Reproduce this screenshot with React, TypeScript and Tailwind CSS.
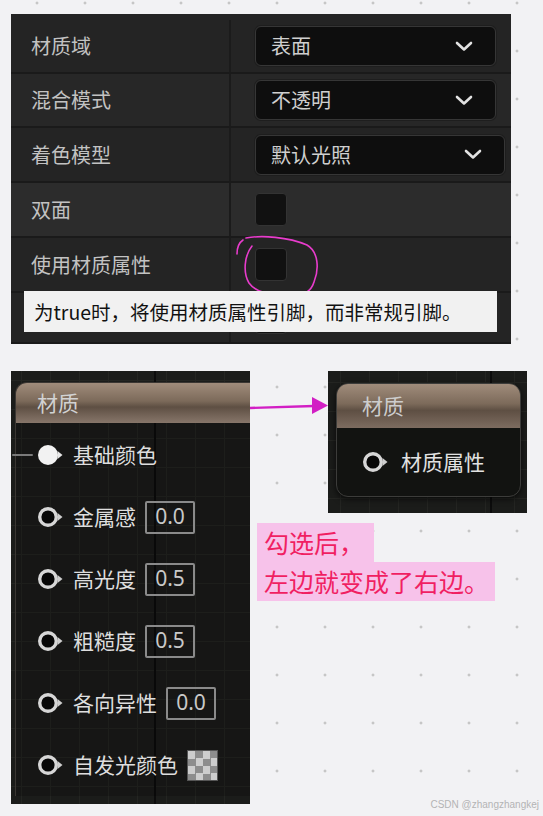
import React from 'react';

const font = "font-['Noto_Sans_CJK_SC','Noto_Sans',sans-serif]";

const Chevron: React.FC = () => (
  <svg width="18" height="11" viewBox="0 0 18 11" fill="none">
    <path d="M2 2 L9 8.5 L16 2" stroke="#e2e2e2" strokeWidth="2.6" strokeLinecap="round" strokeLinejoin="round" />
  </svg>
);

const Pin: React.FC<{ filled?: boolean }> = ({ filled }) => (
  <svg width="26" height="24" viewBox="0 0 26 24" className="shrink-0">
    {filled ? (
      <circle cx="11" cy="12" r="10" fill="#f2f2f2" />
    ) : (
      <circle cx="11" cy="12" r="8.3" fill="#070707" stroke="#d6d6d6" strokeWidth="3.4" />
    )}
    <polygon points="20.5,8 25.5,12 20.5,16" fill={filled ? '#e8e8e8' : '#cfcfcf'} />
  </svg>
);

const Dropdown: React.FC<{ value: string; wide?: boolean }> = ({ value, wide }) => (
  <div
    className={`${wide ? 'w-[250px]' : 'w-[241px]'} h-[40px] rounded-[6px] bg-[#0e0e0e] border border-[#363636] shadow-[0_0_0_1px_#1e1e1e] flex items-center justify-between pl-[15px] pr-[22px]`}
  >
    <span className="text-[20px] text-[#cfcfcf]">{value}</span>
    <Chevron />
  </div>
);

const Checkbox: React.FC = () => (
  <div className="w-[32px] h-[33px] rounded-[4px] bg-[#111111] border border-[#333333]" />
);

const ValueBox: React.FC<{ v: string }> = ({ v }) => (
  <div className="ml-[9px] w-[50px] h-[33px] border-2 border-[#8a8a8a] rounded-[2px] flex items-center justify-center text-[21px] text-[#c9c9c9] font-['Noto_Sans',sans-serif]">
    {v}
  </div>
);

const rows = [
  { label: '材质域', h: 'h-[60px] pt-[6px]', bg: 'bg-[#242424]', value: <Dropdown value="表面" /> },
  { label: '混合模式', h: 'h-[54px]', bg: 'bg-[#272727]', value: <Dropdown value="不透明" /> },
  { label: '着色模型', h: 'h-[55px]', bg: 'bg-[#242424]', value: <Dropdown value="默认光照" wide /> },
  { label: '双面', h: 'h-[55px]', bg: 'bg-[#2c2c2c]', value: <Checkbox /> },
  { label: '使用材质属性', h: 'h-[55px]', bg: 'bg-[#242424]', value: <Checkbox /> },
  { label: '', h: 'h-[51px]', bg: 'bg-[#242424]', value: <Checkbox /> },
];

const pins = [
  { label: '基础颜色', filled: true },
  { label: '金属感', v: '0.0' },
  { label: '高光度', v: '0.5' },
  { label: '粗糙度', v: '0.5' },
  { label: '各向异性', v: '0.0' },
  { label: '自发光颜色', checker: true },
];

const grid =
  "[background-image:linear-gradient(90deg,#0c0c0c_0_2px,transparent_2px),linear-gradient(90deg,#242522_0_1px,transparent_1px),linear-gradient(0deg,#242522_0_1px,transparent_1px)]";

export default function App() {
  return (
    <div
      className={`relative w-[543px] h-[816px] overflow-hidden pt-[14px] bg-[#f2f2f4] ${font} [background-image:radial-gradient(circle,#c6c6c6_1.3px,transparent_1.7px)] [background-size:48px_48px] [background-position:13px_27px]`}
    >
      {/* details panel */}
      <div className="relative ml-[11px] w-[500px] h-[330px] bg-[#242424] overflow-hidden">
        {rows.map((r, i) => (
          <div key={i} className={`${r.h} ${r.bg} grid grid-cols-[220px_1fr] border-b-2 border-[#1a1a1a]`}>
            <div className="flex items-center pl-[20px] border-r-2 border-[#1b1b1b] text-[20px] text-[#c2c2c2]">
              {r.label}
            </div>
            <div className="flex items-center pl-[24px]">{r.value}</div>
          </div>
        ))}

        {/* hand-drawn circle */}
        <svg className="absolute left-[219px] top-[216px]" width="95" height="72" viewBox="0 0 95 72" fill="none">
          <path
            d="M7 24 C7 17 10 12 13 10 M16 8 C32 5 58 7 77 15 C89 22 89 40 84 52 C81 62 73 67 57 66 C42 65 26 63 19 53 C13 43 14 26 22 16"
            stroke="#e83ccc"
            strokeWidth="1.6"
            strokeLinecap="round"
          />
        </svg>

        {/* tooltip */}
        <div className="absolute left-[13px] top-[277px] w-[473px] h-[41px] bg-[#f1f1f1] flex items-center pl-[10px] text-[19.5px] text-[#111111]">
          为true时，将使用材质属性引脚，而非常规引脚。
        </div>
      </div>

      {/* node graphs */}
      <div className="flex items-start mt-[27px] ml-[11px]">
        <div
          className={`w-[239px] h-[433px] bg-[#1b1c1a] overflow-hidden pl-[4px] pt-[11px] ${grid} [background-size:100%_100%,29px_29px,29px_29px] [background-position:143px_0,10px_0,0_10px] [background-repeat:no-repeat,repeat,repeat]`}
        >
          <div className="w-[260px] rounded-tl-[12px] border-l border-t border-[#3a3632] bg-[#0000002e]">
            <div className="h-[40px] rounded-tl-[11px] bg-[linear-gradient(180deg,#a08c7b_0%,#7c6a5a_45%,#5e4f43_60%,#87766a_100%)] flex items-center pl-[21px] text-[21px] text-[#d2d2d2]">
              材质
            </div>
            <div className="pt-[1px]">
              {pins.map((p, i) => (
                <div key={i} className="h-[62px] flex items-center text-[21px] text-[#dedede]">
                  {p.filled ? (
                    <div className="w-[21px] h-[2px] bg-[#7a7a7a] -ml-[4px] mr-[4px] rounded-full" />
                  ) : (
                    <div className="w-[21px] shrink-0" />
                  )}
                  <Pin filled={p.filled} />
                  <span className="ml-[10px]">{p.label}</span>
                  {p.v && <ValueBox v={p.v} />}
                  {p.checker && (
                    <div className="ml-[9px] w-[31px] h-[31px] border border-[#555555] [background-image:repeating-conic-gradient(#8d8d8d_0_25%,#cdcdcd_0_50%)] [background-size:15px_15px]" />
                  )}
                </div>
              ))}
            </div>
          </div>
        </div>

        <div className="flex flex-col">
          <div className="flex items-start">
            <svg width="78" height="30" viewBox="0 0 78 30" className="mt-[20px]">
              <path d="M0 17 L64 15" stroke="#d21fc4" strokeWidth="2.4" />
              <polygon points="62,6 78,14.5 62,23" fill="#d21fc4" />
            </svg>
            <div
              className={`w-[199px] h-[142px] bg-[#1b1c1a] pl-[8px] pt-[12px] ${grid} [background-size:100%_100%,29px_29px,29px_29px] [background-position:162px_0,12px_0,0_12px] [background-repeat:no-repeat,repeat,repeat]`}
            >
              <div className="w-[185px] h-[114px] rounded-[12px] border border-[#3c3c3a] bg-[#121311] shadow-[0_2px_6px_#000000aa] overflow-hidden">
                <div className="h-[44px] bg-[linear-gradient(180deg,#a08c7b_0%,#7c6a5a_45%,#5e4f43_60%,#7d6c60_100%)] flex items-center pl-[25px] text-[21px] text-[#cdcdcd]">
                  材质
                </div>
                <div className="h-[68px] flex items-center pl-[25px] text-[21px] text-[#e2e2e2]">
                  <Pin />
                  <span className="ml-[13px]">材质属性</span>
                </div>
              </div>
            </div>
          </div>

          <div className="ml-[7px] mt-[10px] text-[25px] leading-[39px] text-[#f01f62]">
            <div className="w-fit bg-[#f7c2ea] pl-[7px] pr-[10px]">勾选后，</div>
            <div className="w-fit bg-[#f7c2ea] pl-[7px] pr-[6px]">左边就变成了右边。</div>
          </div>
        </div>
      </div>

      <div className="absolute right-[4px] bottom-[4px] text-[10px] text-[#b4b4b4] font-['Liberation_Sans',sans-serif]">
        CSDN @zhangzhangkej
      </div>
    </div>
  );
}
